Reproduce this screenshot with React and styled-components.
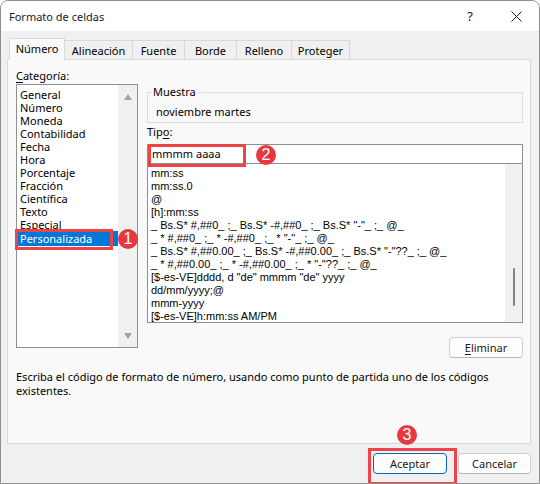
import React from 'react';
import styled, { createGlobalStyle } from 'styled-components';

const UI = `"Noto Sans", "Open Sans", sans-serif`;
const LIST = `"Liberation Sans", Arial, sans-serif`;

const Global = createGlobalStyle`
  html, body { margin: 0; padding: 0; background: #ffffff; }
  * { box-sizing: border-box; }
`;

const Window = styled.div`
  position: relative;
  width: 540px;
  height: 484px;
  border: 1px solid #8f8f8f;
  border-radius: 8px 8px 0 0;
  background: #f0f0f0;
  display: flex;
  flex-direction: column;
  overflow: hidden;
  font-family: ${UI};
  font-size: 11px;
  color: #000;
`;

const TitleBar = styled.div`
  height: 30px;
  flex: none;
  background: #ffffff;
  display: flex;
  align-items: center;
  padding-left: 8px;
`;

const Title = styled.div`
  flex: 1;
  font-size: 11px;
  color: #1a1a1a;
`;

const Caption = styled.div`
  width: 46px;
  height: 30px;
  display: flex;
  align-items: center;
  justify-content: center;
  font-size: 13px;
  color: #1a1a1a;
`;

const Body = styled.div`
  flex: 1;
  display: flex;
  flex-direction: column;
  padding: 7px 8px 0 6px;
`;

const TabStrip = styled.div`
  height: 21px;
  display: flex;
  align-items: flex-end;
  padding-left: 2px;
`;

const Tab = styled.div`
  width: ${p => p.$w}px;
  height: ${p => (p.$active ? 22 : 19)}px;
  margin-bottom: ${p => (p.$active ? -1 : 0)}px;
  margin-left: -1px;
  &:first-child { margin-left: 0; }
  position: relative;
  z-index: ${p => (p.$active ? 2 : 1)};
  background: ${p => (p.$active ? '#f9f9f9' : '#f0f0f0')};
  border: 1px solid #d9d9d9;
  border-bottom: none;
  display: flex;
  align-items: center;
  justify-content: center;
  padding-bottom: ${p => (p.$active ? 2 : 0)}px;
  font-size: 11px;
`;

const Panel = styled.div`
  height: 385px;
  background: #f9f9f9;
  border: 1px solid #d9d9d9;
  padding: 9px 7px 0 8px;
  display: flex;
  flex-direction: column;
`;

const Columns = styled.div`
  display: grid;
  grid-template-columns: 122px 376px;
  column-gap: 9px;
`;

const Column = styled.div`
  display: flex;
  flex-direction: column;
`;

const Label = styled.div`
  line-height: 14px;
  height: 14px;
  margin-bottom: ${p => p.$mb || 0}px;
  margin-top: ${p => p.$mt || 0}px;
`;

const U = styled.span`
  text-decoration: underline;
  text-underline-offset: 2px;
`;

const ListBox = styled.div`
  height: ${p => p.$h}px;
  background: #ffffff;
  border: 1px solid #8c8f96;
  display: flex;
`;

const Items = styled.div`
  flex: 1;
  padding-top: ${p => p.$pt}px;
  display: flex;
  flex-direction: column;
  font-family: ${p => (p.$mono ? LIST : UI)};
  font-size: 11px;
`;

const Item = styled.div`
  height: 13px;
  line-height: 13px;
  padding-left: ${p => p.$pl}px;
  white-space: pre;
  background: ${p => (p.$sel ? '#0078d7' : 'transparent')};
  color: ${p => (p.$sel ? '#ffffff' : '#000000')};
  ${p => (p.$sel ? 'height: 15px; line-height: 15px;' : '')}
`;

const ScrollTrack = styled.div`
  width: ${p => p.$w}px;
  flex: none;
  background: #f0f0f0;
  display: flex;
  flex-direction: column;
  align-items: center;
  justify-content: ${p => (p.$arrows ? 'space-between' : 'flex-start')};
  padding: ${p => (p.$arrows ? '9px 0 8px' : '0')};
`;

const Thumb = styled.div`
  width: 2px;
  height: ${p => p.$h}px;
  margin-top: ${p => p.$top}px;
  margin-left: 1px;
  background: #858585;
  border-radius: 1px;
`;

const Arrow = styled.div`
  width: 0;
  height: 0;
  border-left: 4.5px solid transparent;
  border-right: 4.5px solid transparent;
  ${p => (p.$down ? 'border-top: 6px solid #a3a3a3;' : 'border-bottom: 6px solid #a3a3a3;')}
`;

const Group = styled.fieldset`
  margin: 16px 0 0 0;
  padding: 0 8px 2px 8px;
  border: 1px solid #dcdcdc;
  height: 38px;
`;

const Legend = styled.legend`
  padding: 0 1px;
  margin-left: -4px;
  line-height: 14px;
  font-size: 11px;
`;

const Sample = styled.div`
  line-height: 14px;
  margin-top: 6px;
`;

const Input = styled.div`
  height: 19px;
  background: #ffffff;
  border: 1px solid #8c8f96;
  border-bottom: none;
  padding-left: 4px;
  line-height: 18px;
  font-size: 11px;
`;

const Button = styled.div`
  width: ${p => p.$w}px;
  height: 21px;
  background: #fdfdfd;
  border: 1px solid ${p => (p.$primary ? '#0067c0' : '#d0d0d0')};
  border-bottom-color: ${p => (p.$primary ? '#0067c0' : '#b8b8b8')};
  border-radius: 4px;
  display: flex;
  align-items: center;
  justify-content: center;
  font-size: 11px;
  color: #1a1a1a;
`;

const RightRow = styled.div`
  display: flex;
  justify-content: flex-end;
  margin-top: ${p => p.$mt || 0}px;
  gap: 11px;
`;

const Description = styled.div`
  margin-top: 12px;
  line-height: 14px;
  font-size: 11px;
  width: 500px;
`;

const Footer = styled.div`
  display: flex;
  justify-content: flex-end;
  gap: 11px;
  margin-top: 9px;
`;

const RedBox = styled.div`
  position: absolute;
  left: ${p => p.$x}px;
  top: ${p => p.$y}px;
  width: ${p => p.$w}px;
  height: ${p => p.$h}px;
  border: 3px solid #ee4349;
  z-index: 5;
  pointer-events: none;
`;

const Badge = styled.div`
  position: absolute;
  left: ${p => p.$cx - 10}px;
  top: ${p => p.$cy - 10}px;
  width: 20px;
  height: 20px;
  border-radius: 50%;
  background: #e8383f;
  color: #ffffff;
  font-family: "Liberation Sans", Arial, sans-serif;
  font-size: 16px;
  line-height: 20px;
  text-align: center;
  z-index: 6;
`;

const categories = [
  'General', 'Número', 'Moneda', 'Contabilidad', 'Fecha', 'Hora', 'Porcentaje',
  'Fracción', 'Científica', 'Texto', 'Especial', 'Personalizada',
];

const formats = [
  'mm:ss',
  'mm:ss.0',
  '@',
  '[h]:mm:ss',
  '_ Bs.S* #,##0_ ;_ Bs.S* -#,##0_ ;_ Bs.S* "-"_ ;_ @_',
  '_ * #,##0_ ;_ * -#,##0_ ;_ * "-"_ ;_ @_',
  '_ Bs.S* #,##0.00_ ;_ Bs.S* -#,##0.00_ ;_ Bs.S* "-"??_ ;_ @_',
  '_ * #,##0.00_ ;_ * -#,##0.00_ ;_ * "-"??_ ;_ @_',
  '[$-es-VE]dddd, d "de" mmmm "de" yyyy',
  'dd/mm/yyyy;@',
  'mmm-yyyy',
  '[$-es-VE]h:mm:ss AM/PM',
];

const tabs = [
  ['Número', 56, true],
  ['Alineación', 69],
  ['Fuente', 53],
  ['Borde', 53],
  ['Relleno', 56],
  ['Proteger', 59],
];

function CloseIcon() {
  return (
    <svg width="11" height="11" viewBox="0 0 11 11">
      <path d="M0.5 0.5 L10.5 10.5 M10.5 0.5 L0.5 10.5" stroke="#1a1a1a" strokeWidth="1" />
    </svg>
  );
}

export default function App() {
  return (
    <>
      <Global />
      <Window>
        <TitleBar>
          <Title>Formato de celdas</Title>
          <Caption>?</Caption>
          <Caption><CloseIcon /></Caption>
        </TitleBar>
        <Body>
          <TabStrip>
            {tabs.map(([t, w, a]) => (
              <Tab key={t} $w={w} $active={a}>{t}</Tab>
            ))}
          </TabStrip>
          <Panel>
            <Columns>
              <Column>
                <Label $mb={1}><U>C</U>ategoría:</Label>
                <ListBox $h={264}>
                  <Items $pt={3}>
                    {categories.map((c, i) => (
                      <Item key={c} $pl={3} $sel={i === categories.length - 1}>{c}</Item>
                    ))}
                  </Items>
                  <ScrollTrack $w={19} $arrows>
                    <Arrow />
                    <Arrow $down />
                  </ScrollTrack>
                </ListBox>
              </Column>
              <Column>
                <Group>
                  <Legend>Muestra</Legend>
                  <Sample>noviembre martes</Sample>
                </Group>
                <Label $mt={2} $mb={5}>Tip<U>o</U>:</Label>
                <Input>mmmm aaaa</Input>
                <ListBox $h={160}>
                  <Items $pt={3} $mono>
                    {formats.map(f => (
                      <Item key={f} $pl={3}>{f}</Item>
                    ))}
                  </Items>
                  <ScrollTrack $w={17}>
                    <Thumb $top={104} $h={38} />
                  </ScrollTrack>
                </ListBox>
                <RightRow $mt={14}>
                  <Button $w={74}><U>E</U>liminar</Button>
                </RightRow>
              </Column>
            </Columns>
            <Description>
              Escriba el código de formato de número, usando como punto de partida uno de los códigos existentes.
            </Description>
          </Panel>
          <Footer>
            <Button $w={74} $primary>Aceptar</Button>
            <Button $w={73}>Cancelar</Button>
          </Footer>
        </Body>
        <RedBox $x={14} $y={228} $w={98} $h={21} />
        <Badge $cx={127} $cy={238}>1</Badge>
        <RedBox $x={147} $y={143} $w={98} $h={23} />
        <Badge $cx={265} $cy={154}>2</Badge>
        <RedBox $x={367} $y={447} $w={89} $h={37} />
        <Badge $cx={406} $cy={434}>3</Badge>
      </Window>
    </>
  );
}
